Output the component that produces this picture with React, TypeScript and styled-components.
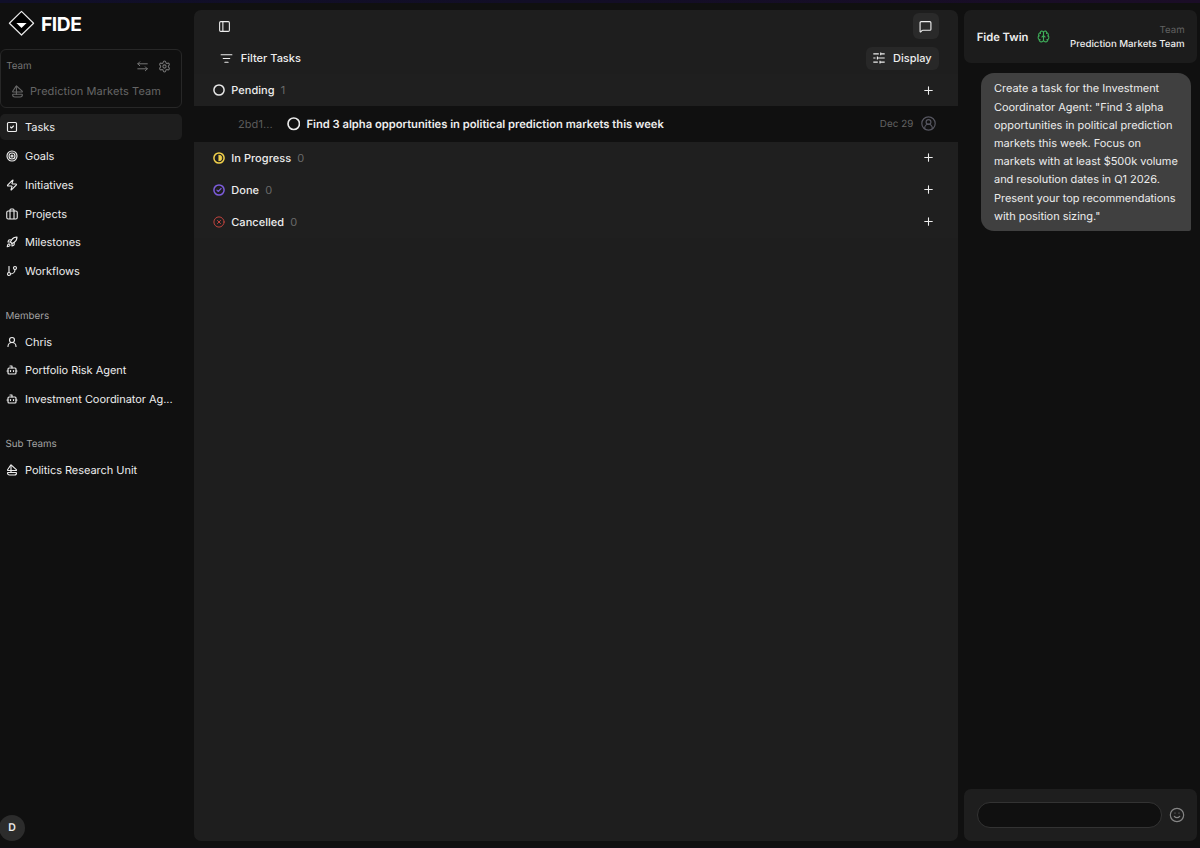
import React from "react";
import styled, { createGlobalStyle } from "styled-components";
import {
  Bot,
  Brain,
  GitBranch,
  ListFilter,
  MessageSquare,
  PanelLeft,
  Plus,
  Rocket,
  Sailboat,
  Settings,
  Smile,
  SquareCheck,
  Target,
  UserRound,
  Zap,
} from "lucide-react";

const GlobalStyle = createGlobalStyle`
  *, *::before, *::after { box-sizing: border-box; }
  body {
    margin: 0;
    background: #101010;
    color: #ededed;
    font-family: Inter, "Liberation Sans", sans-serif;
    font-size: 11px;
    text-rendering: geometricPrecision;
    -webkit-font-smoothing: antialiased;
  }
  button { font: inherit; color: inherit; letter-spacing: inherit; border: 0; background: none; padding: 0; }
  svg { display: block; flex: none; }
`;

const Shell = styled.div`
  height: 848px;
  display: flex;
  flex-direction: column;
  overflow: hidden;
`;

const TopStrip = styled.div`
  height: 3px;
  flex: none;
  background: linear-gradient(90deg, #100f29, #120e26 45%, #1b0d27);
`;

const BottomStrip = styled.div`
  height: 1px;
  flex: none;
  background: #110f16;
`;

const Columns = styled.div`
  flex: 1;
  min-height: 0;
  display: grid;
  grid-template-columns: 194.4px 763.2px 233px;
  padding: 7px 0 6.3px;
`;

const Sidebar = styled.aside`
  display: flex;
  flex-direction: column;
  padding-right: 12.4px;
`;

const Brand = styled.div`
  display: flex;
  align-items: center;
  gap: 6px;
  height: 27px;
  padding-left: 8px;
  font-size: 19.2px;
  line-height: 22px;
  font-weight: 700;
  letter-spacing: -0.4px;
  color: #fff;
`;

const TeamCard = styled.section`
  height: 59px;
  margin-top: 12px;
  border: 1px solid #272727;
  border-radius: 6px;
  color: #666;
  padding: 9px 10px 0 5.2px;
`;

const TeamHead = styled.div`
  display: flex;
  align-items: center;
  height: 14px;
  font-size: 9.8px;
  line-height: 14px;
  color: #757575;
`;

const TeamLabel = styled.span`
  padding-top: 2px;
`;

const TeamActions = styled.div`
  display: flex;
  align-items: center;
  gap: 10px;
  margin-left: auto;
`;

const TeamName = styled.div`
  display: flex;
  align-items: center;
  gap: 6px;
  height: 16px;
  margin-top: 10px;
  padding-left: 4.8px;
  letter-spacing: 0.08px;
  white-space: nowrap;
`;

const NavList = styled.nav`
  display: flex;
  flex-direction: column;
  gap: 2.8px;
`;

const NavItem = styled.a<{ $active?: boolean }>`
  display: flex;
  align-items: center;
  gap: 7px;
  height: 26px;
  padding-left: 6px;
  border-radius: 5px;
  letter-spacing: -0.04px;
  white-space: nowrap;
  background: ${(p) => (p.$active ? "#1e1e1e" : "transparent")};
`;

const MainNav = styled(NavList)`
  margin-top: 6.2px;
`;

const GroupLabel = styled.h2`
  margin: 26.2px 0 5.2px;
  padding-left: 5.5px;
  height: 13px;
  line-height: 13px;
  font-size: 9.8px;
  font-weight: 400;
  letter-spacing: -0.02px;
  color: #a3a3a3;
`;

const Avatar = styled.div`
  width: 26px;
  height: 26px;
  margin: auto 0 0 -1px;
  border-radius: 50%;
  background: #2c2c2c;
  display: flex;
  align-items: center;
  justify-content: center;
  font-size: 10.5px;
  font-weight: 600;
`;

const Board = styled.main`
  background: #1e1e1e;
  border-radius: 7px;
  overflow: hidden;
`;

const BoardTop = styled.header`
  display: flex;
  align-items: center;
  justify-content: space-between;
  height: 32px;
  padding: 0 19px 0 23.7px;
`;

const ChatToggle = styled.button`
  width: 26px;
  height: 26px;
  border-radius: 6px;
  background: #2a2a2a;
  display: grid;
  place-items: center;
`;

const Toolbar = styled(BoardTop)`
  padding-left: 25.4px;
  padding-top: 0.8px;
  font-weight: 500;
`;

const FilterButton = styled.button`
  display: flex;
  align-items: center;
  gap: 8px;
`;

const DisplayButton = styled(FilterButton)`
  height: 23px;
  width: 72.5px;
  padding-left: 7px;
  border-radius: 6px;
  background: #282828;
`;

const GroupRow = styled.div`
  display: flex;
  align-items: center;
  height: 32px;
  padding: 0 22.5px 0 18.7px;
  gap: 6.2px;
  background: #1f1f1f;
  font-weight: 500;
  letter-spacing: 0.04px;
`;

const Count = styled.span`
  color: #6a6a6a;
  font-weight: 400;
  flex: 1;
`;

const TaskRow = styled.div`
  display: flex;
  align-items: center;
  height: 35.6px;
  padding: 0 21.3px 0 43.5px;
  background: #101010;
`;

const TaskId = styled.span`
  width: 49px;
  color: #5c5c5c;
  letter-spacing: 0.12px;
`;

const TaskTitle = styled.span`
  flex: 1;
  padding-left: 6px;
  font-size: 11.2px;
  font-weight: 600;
`;

const TaskDate = styled.time`
  font-size: 9.8px;
  line-height: 13px;
  letter-spacing: 0.05px;
  color: #636363;
  padding-top: 1px;
  margin-right: 8px;
`;

const ChatColumn = styled.aside`
  display: flex;
  flex-direction: column;
  margin-left: 6.6px;
  width: 233px;
`;

const ChatHeader = styled.header`
  display: flex;
  align-items: center;
  gap: 9px;
  height: 53px;
  padding: 0 12.5px;
  border-radius: 7px;
  background: #1c1c1c;
`;

const ChatTitle = styled.h1`
  margin: 0;
  font-size: 11.2px;
  font-weight: 600;
`;

const ChatTeam = styled.div`
  margin-left: auto;
  padding-top: 3px;
  text-align: right;
  font-size: 9.7px;
  line-height: 14.4px;
  font-weight: 500;
  letter-spacing: -0.02px;
`;

const ChatTeamLabel = styled.div`
  color: #606060;
  font-weight: 400;
`;

const Bubble = styled.p`
  align-self: flex-end;
  width: 210px;
  height: 158px;
  margin: 10px 6.2px 0 0;
  padding: 6.4px 10px 6px 13px;
  border-radius: 13px 13px 2px 13px;
  background: #404040;
  line-height: 18.2px;
  letter-spacing: -0.03px;
`;

const Composer = styled.form`
  display: flex;
  align-items: center;
  gap: 7px;
  height: 51.4px;
  margin-top: auto;
  padding: 0 12.5px;
  border-radius: 7px;
  background: #1e1e1e;
  color: #858585;
`;

const MessageInput = styled.input`
  flex: 1;
  min-width: 0;
  height: 26px;
  padding: 0 12px;
  border: 1px solid #333;
  border-radius: 13px;
  background: #101010;
  color: #ededed;
  outline: none;
`;

const Logo = () => (
  <svg width="27" height="27" viewBox="0 0 27 27">
    <path d="M13.5 1.4 25.6 13.2 13.5 25 1.4 13.2Z" fill="#000" stroke="#e8e8e8" strokeWidth="1.2" strokeLinejoin="round" />
    <path d="M8.4 13.1h10.2l-5.1 5Z" fill="#fff" />
  </svg>
);

type State = "pending" | "progress" | "done" | "cancelled";

const StateIcon = ({ state, size = 12 }: { state: State; size?: number }) => {
  const color = { pending: "#e8e8e8", progress: "#f0cf4a", done: "#7c5cdb", cancelled: "#c0443f" }[state];
  return (
    <svg width={size} height={size} viewBox="0 0 12 12" fill="none" stroke={color} strokeLinecap="round" strokeLinejoin="round">
      <circle cx="6" cy="6" r="5.1" strokeWidth={state === "cancelled" ? 1 : 1.5} />
      {state === "progress" && <path d="M6 3.1a2.9 2.9 0 0 1 0 5.8Z" fill={color} strokeWidth="0.6" />}
      {state === "done" && <path d="M3.9 6.2 5.3 7.5 8.1 4.5" strokeWidth="1.1" />}
      {state === "cancelled" && <path d="m4.5 4.5 3 3m0-3-3 3" strokeWidth="1" />}
    </svg>
  );
};

const Sliders = () => (
  <svg width="12" height="12" viewBox="0 0 12 12" stroke="#ededed" strokeWidth="1.1" fill="none">
    <path d="M.3 1.9h5.5M7.9 1.9h3.8M7.7.5v2.8M.3 6h2.2M4.5 6h7.2M4.4 4.6v2.8M.3 10.1h4.5M7 10.1h4.7M7 8.7v2.8" />
  </svg>
);

const Person = () => (
  <svg width="15" height="15" viewBox="0 0 15 15" stroke="#565660" strokeWidth="1.2" fill="none" strokeLinecap="round">
    <circle cx="7.5" cy="7.5" r="6.7" />
    <circle cx="7.5" cy="6" r="2.4" />
    <path d="M3.7 12.7V12a3.6 3.6 0 0 1 7.6 0v.7" />
  </svg>
);

const Swap = () => (
  <svg width="11" height="11" viewBox="0 0 11 11" stroke="currentColor" fill="none" strokeLinecap="round" strokeLinejoin="round">
    <path d="M10.3 2.8H.8M2.8.8.8 2.8l2 2M.8 7.8h9.5M8.3 5.8l2 2-2 2" />
  </svg>
);

const Suitcase = () => (
  <svg width="12" height="12" viewBox="0 0 24 24" stroke="currentColor" strokeWidth="2.2" fill="none" strokeLinejoin="round">
    <rect x="1.5" y="6" width="21" height="16" rx="3" />
    <path d="M8 22V4a2 2 0 0 1 2-2h4a2 2 0 0 1 2 2v18" />
  </svg>
);

const nav = [
  { label: "Tasks", icon: SquareCheck },
  { label: "Goals", icon: Target },
  { label: "Initiatives", icon: Zap },
  { label: "Projects", icon: Suitcase },
  { label: "Milestones", icon: Rocket },
  { label: "Workflows", icon: GitBranch },
];

const members = [
  { label: "Chris", icon: UserRound },
  { label: "Portfolio Risk Agent", icon: Bot },
  { label: "Investment Coordinator Ag...", icon: Bot },
];

const Group = ({ state, label, count }: { state: State; label: string; count: number }) => (
  <GroupRow>
    <StateIcon state={state} />
    <span>{label}</span>
    <Count>{count}</Count>
    <Plus size={13} strokeWidth={2} />
  </GroupRow>
);

export default function App() {
  return (
    <Shell>
      <GlobalStyle />
      <TopStrip />
      <Columns>
        <Sidebar>
          <Brand>
            <Logo />
            FIDE
          </Brand>
          <TeamCard>
            <TeamHead>
              <TeamLabel>Team</TeamLabel>
              <TeamActions>
                <Swap />
                <Settings size={13} strokeWidth={1.9} />
              </TeamActions>
            </TeamHead>
            <TeamName>
              <Sailboat size={13} />
              Prediction Markets Team
            </TeamName>
          </TeamCard>
          <MainNav>
            {nav.map(({ label, icon: Icon }, i) => (
              <NavItem key={label} $active={i === 0}>
                <Icon size={12} strokeWidth={2.3} />
                {label}
              </NavItem>
            ))}
          </MainNav>
          <GroupLabel>Members</GroupLabel>
          <NavList>
            {members.map(({ label, icon: Icon }) => (
              <NavItem key={label}>
                <Icon size={12} strokeWidth={2.3} />
                {label}
              </NavItem>
            ))}
          </NavList>
          <GroupLabel>Sub Teams</GroupLabel>
          <NavList>
            <NavItem>
              <Sailboat size={12} strokeWidth={2.3} />
              Politics Research Unit
            </NavItem>
          </NavList>
          <Avatar>D</Avatar>
        </Sidebar>

        <Board>
          <BoardTop>
            <PanelLeft size={13} strokeWidth={2} />
            <ChatToggle>
              <MessageSquare size={13} strokeWidth={2.1} />
            </ChatToggle>
          </BoardTop>
          <Toolbar>
            <FilterButton>
              <ListFilter size={13} strokeWidth={2} />
              Filter Tasks
            </FilterButton>
            <DisplayButton>
              <Sliders />
              Display
            </DisplayButton>
          </Toolbar>
          <Group state="pending" label="Pending" count={1} />
          <TaskRow>
            <TaskId>2bd1...</TaskId>
            <StateIcon state="pending" size={13.5} />
            <TaskTitle>Find 3 alpha opportunities in political prediction markets this week</TaskTitle>
            <TaskDate>Dec 29</TaskDate>
            <Person />
          </TaskRow>
          <Group state="progress" label="In Progress" count={0} />
          <Group state="done" label="Done" count={0} />
          <Group state="cancelled" label="Cancelled" count={0} />
        </Board>

        <ChatColumn>
          <ChatHeader>
            <ChatTitle>Fide Twin</ChatTitle>
            <Brain size={13} color="#3fae5a" strokeWidth={2} />
            <ChatTeam>
              <ChatTeamLabel>Team</ChatTeamLabel>
              Prediction Markets Team
            </ChatTeam>
          </ChatHeader>
          <Bubble>
            Create a task for the Investment Coordinator Agent: "Find 3 alpha opportunities in political prediction
            markets this week. Focus on markets with at least $500k volume and resolution dates in Q1 2026. Present your
            top recommendations with position sizing."
          </Bubble>
          <Composer>
            <MessageInput aria-label="Message" />
            <Smile size={16} strokeWidth={1.8} />
          </Composer>
        </ChatColumn>
      </Columns>
      <BottomStrip />
    </Shell>
  );
}
